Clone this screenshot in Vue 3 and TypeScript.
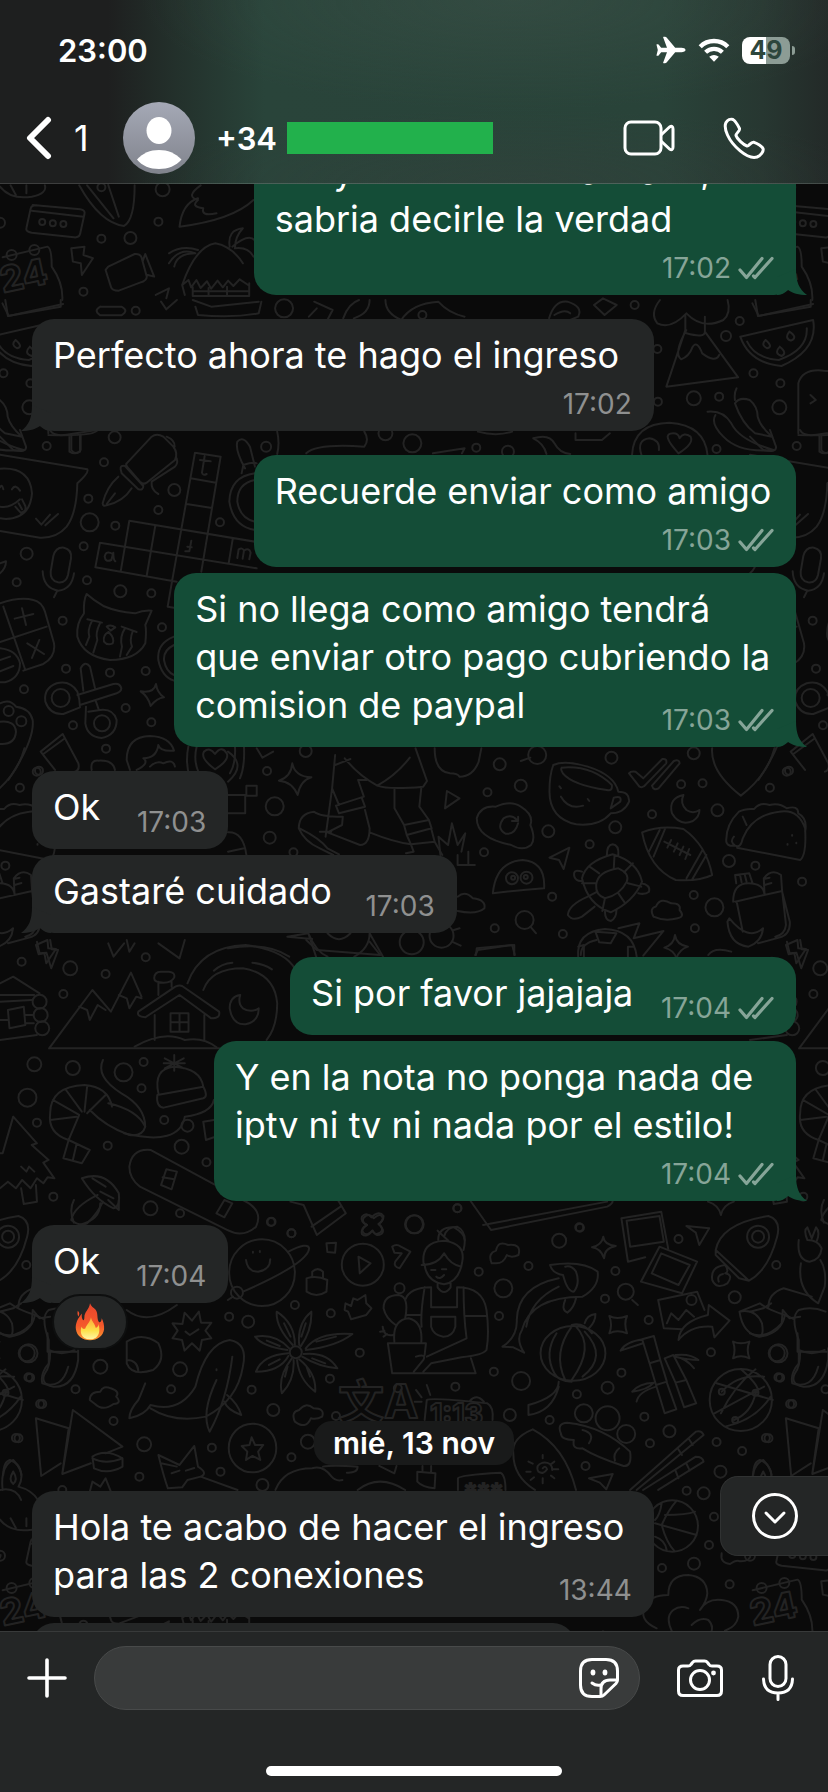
<script setup lang="ts">
import { ref } from 'vue'

interface Message {
  id: number
  mine: boolean
  lines: string[]
  time: string
  /** share of the window width taken by the bubble, in percent */
  width: number
  /** time sits on a row of its own under the text */
  stacked?: boolean
  /** last bubble of a run carries the tail */
  tail?: boolean
  reaction?: boolean
}

const before: Message[] = [
  { id: 1, mine: true, lines: ['No yo uso solo una clave, no', 'sabria decirle la verdad'], time: '17:02', width: 65.5, stacked: true, tail: true },
  { id: 2, mine: false, lines: ['Perfecto ahora te hago el ingreso'], time: '17:02', width: 75.1, stacked: true, tail: true },
  { id: 3, mine: true, lines: ['Recuerde enviar como amigo'], time: '17:03', width: 65.5, stacked: true },
  { id: 4, mine: true, lines: ['Si no llega como amigo tendrá', 'que enviar otro pago cubriendo la', 'comision de paypal'], time: '17:03', width: 75.1, tail: true },
  { id: 5, mine: false, lines: ['Ok'], time: '17:03', width: 23.7 },
  { id: 6, mine: false, lines: ['Gastaré cuidado'], time: '17:03', width: 51.3, tail: true },
  { id: 7, mine: true, lines: ['Si por favor jajajaja'], time: '17:04', width: 61.1 },
  { id: 8, mine: true, lines: ['Y en la nota no ponga nada de', 'iptv ni tv ni nada por el estilo!'], time: '17:04', width: 70.3, stacked: true, tail: true },
  { id: 9, mine: false, lines: ['Ok'], time: '17:04', width: 23.7, tail: true, reaction: true },
]
const after: Message[] = [
  { id: 10, mine: false, lines: ['Hola te acabo de hacer el ingreso', 'para las 2 conexiones'], time: '13:44', width: 75.1 },
  { id: 11, mine: false, lines: [''], time: '', width: 65.6 },
]

type Entry = { kind: 'message'; message: Message } | { kind: 'date'; label: string }
const entries: Entry[] = [
  ...before.map((message): Entry => ({ kind: 'message', message })),
  { kind: 'date', label: 'mié, 13 nov' },
  ...after.map((message): Entry => ({ kind: 'message', message })),
]

function turns(index: number): boolean {
  const a = entries[index - 1]
  const b = entries[index]
  return !!a && a.kind === 'message' && b.kind === 'message' && a.message.mine !== b.message.mine
}

const draft = ref('')

/* Wallpaper: each sheet has its own drawing units, placed by origin and scale. */
interface Sheet {
  x: number
  y: number
  sx: number
  sy: number
  paths: string[]
  dots: [number, number, number][]
}
const sheets: Sheet[] = [
  {
    x: 0, y: 0, sx: 0.528, sy: 0.3333,
    paths: [
      'M62 615L152 628Q162 630 160 642L152 700Q150 714 140 712L60 698Q48 695 50 684L58 626Q60 614 70 616M60 632L158 650',
      'M150 556Q190 670 235 678Q255 660 255 556M165 556L215 655M205 555L225 650',
      'M375 595Q345 610 340 680Q440 660 480 600M380 556Q350 590 375 600Q360 620 385 625Q380 650 410 640',
      'M135 745L160 740L158 765L176 775L155 825L153 790L138 785Z',
      'M205 800L255 762Q265 760 268 772L278 830Q278 842 265 848L225 872Q212 872 210 860L200 810ZM270 785L275 762L292 830L280 825',
      'M345 855Q370 740 408 730Q440 740 460 790M320 790Q340 740 370 760Q335 760 330 800M320 760Q345 735 375 750M435 740Q430 690 460 685Q445 710 445 745M440 740Q470 700 482 720M445 745Q470 740 480 770M350 885L345 855L357 840L362 862L372 840L380 864L392 844L400 866L412 842L422 862L432 842L442 858L454 838L470 855M365 862V888H472V850M395 885V864M430 885V860M365 874H472',
      'M5 772L90 740Q98 745 98 800Q120 850 118 900',
      'M0 560Q20 600 60 590Q90 580 85 556M20 556L30 585M50 556V580',
      'M295 885L320 865L315 895',
    ],
    dots: [[80, 666, 3], [100, 670, 3], [120, 672, 3], [22, 765, 5], [65, 750, 5], [308, 568, 7], [300, 665, 4], [192, 716, 4], [247, 714, 6], [158, 875, 4], [0, 668, 5], [192, 562, 4]],
  },
  {
    x: 0, y: 300, sx: 0.528, sy: 0.3333,
    paths: [
      'M10 0L15 48L115 20V0', 'M190 20H230Q245 32 230 46H190Q176 32 190 20', 'M305 5L315 28L335 0M370 20L375 45Q440 55 490 40L495 5M365 0L400 20L490 5',
      'M595 5L630 30L620 60M585 50L600 25M650 55Q660 10 680 0M670 55Q700 40 700 0M730 0Q730 40 760 60Q780 10 830 5Q850 40 880 50',
      'M1040 55Q1050 0 1075 5Q1105 20 1095 50L1080 60M1050 45Q1070 25 1080 40M1125 15L1142 -5L1168 15L1145 45Z',
      'M1250 0Q1230 40 1245 70Q1270 90 1300 40Q1330 90 1370 60Q1385 40 1378 0M1298 45V90L1262 260L1398 232L1335 95V50M1300 100Q1335 115 1335 95M1300 90Q1275 160 1290 178Q1305 170 1312 140Q1320 120 1330 160Q1355 190 1362 165',
      'M1402 110L1540 60Q1550 150 1480 198Q1420 190 1402 110M1415 125Q1430 175 1475 180Q1530 150 1528 85M1450 120Q1440 135 1453 145Q1465 140 1450 120M1477 140Q1465 160 1480 168Q1492 160 1477 140M1495 95Q1485 115 1498 122Q1512 112 1495 95',
      'M1425 10L1437 48L1540 12', 'M1512 400V250Q1520 205 1560 212Q1600 215 1605 260V390Q1600 410 1512 405M1552 405V455Q1562 465 1572 455V405M1535 285L1545 300L1535 310M1590 285L1580 300',
      'M1340 335Q1370 330 1385 370Q1400 420 1465 450Q1400 460 1370 410Q1345 370 1355 345M1392 300Q1390 280 1395 265M1392 310Q1400 290 1420 300Q1435 320 1435 350Q1440 380 1462 410L1430 400Q1405 370 1392 310',
      'M1197 465Q1200 370 1268 368Q1335 375 1340 465M1285 460Q1250 400 1275 400Q1285 400 1287 415Q1295 395 1308 410Q1315 430 1285 460M1215 465Q1205 420 1230 415Q1250 420 1248 450',
      'M525 395Q530 430 525 462M580 460Q600 430 690 440Q700 420 690 395M820 460L880 445L875 460M1010 415Q1040 400 1050 430Q1060 460 1080 462M1010 415Q1030 430 1035 462M1090 400V420H1140L1155 400M905 395Q940 410 970 395',
    ],
    dots: [[257, 32, 4], [538, 25, 9], [800, 45, 4], [1202, 15, 4], [1401, 63, 4], [1375, 108, 5], [1427, 220, 4], [1478, 250, 4], [1245, 147, 4], [1314, 295, 7], [1362, 290, 4], [1476, 322, 7], [1246, 305, 4], [1357, 447, 4], [504, 440, 5], [781, 430, 9], [902, 443, 4], [962, 455, 6], [730, 400, 7]],
  },
  {
    x: 0, y: 430, sx: 0.3333, sy: 0.3333,
    paths: [
      'M0 74L262 118Q268 128 232 160Q230 250 200 290Q170 325 120 323L0 303', 'M0 116Q90 110 96 190Q90 265 18 267L0 265M0 172Q6 160 10 178M36 178Q46 160 60 182M0 230Q30 236 60 208M46 230L62 248Q80 246 76 228L66 208M56 220L66 238M108 266L124 284L150 254M136 286L174 252',
      'M380 100L455 20Q470 8 490 20L520 50Q535 70 525 90L440 158Q430 165 420 155L383 112Q376 104 380 100M362 118Q360 105 375 108L430 168Q430 182 415 178L365 130ZM355 140Q320 170 308 220Q308 230 320 226Q370 215 395 175M320 222L345 190M500 20Q525 30 524 50M530 85Q535 100 525 110L455 155Q452 180 475 192',
      'M585 68L662 80L604 425M585 68L516 455L503 530L540 536M572 145L648 158M560 222L636 234M388 272L770 336M300 338L770 415M388 272L362 425M300 338L286 412L530 455M466 286L440 438M698 328L686 400',
      'M160 378Q168 350 192 353Q216 358 213 385L204 435Q198 460 174 457Q150 452 152 425ZM128 424Q130 475 175 482Q215 478 222 430M172 482L162 502',
      'M0 520Q60 500 100 510Q125 515 135 545L162 640Q168 680 130 702L70 722M10 530L76 720M0 636L140 590M44 566L100 552M66 535L78 585M82 640L132 672M118 630L96 684M0 655Q50 660 60 700Q60 745 15 757L0 757M0 690L30 680M0 724L40 708',
      'M260 492Q250 510 252 550Q228 580 232 620Q250 680 330 690Q410 690 436 640Q440 600 436 585L455 542Q430 540 405 550Q350 545 310 528Q280 510 260 492ZM262 568L306 578M365 590L410 606M275 575Q262 600 268 620L258 645M300 580Q285 610 292 630L280 668M375 595Q358 620 366 650L360 680M398 604Q388 630 396 650L380 675M326 606Q345 625 338 640Q322 648 312 635Q308 615 326 606M320 590Q332 582 346 592L332 602Z',
      'M232 785Q210 750 170 760Q130 775 136 815Q150 855 190 852L240 832Q240 810 232 785M232 795L340 762Q360 758 364 775Q364 785 350 790L240 825M250 782L242 715Q255 690 270 710L285 775M258 830L256 880Q262 920 305 924Q350 915 350 870Q340 835 300 840L265 845M288 815L296 838',
      'M468 762Q462 790 422 784Q445 800 452 828Q470 805 492 802Q472 790 468 762Z',
      'M0 875Q45 870 48 905Q45 945 0 942M0 820Q30 805 48 830Q90 835 98 870Q105 930 25 1050',
      'M122 965L188 912L235 1000Q240 1020 225 1025M122 965L165 1020M130 972L195 925',
      'M380 990Q380 920 450 918Q510 920 522 962Q480 965 475 945Q470 985 430 985Q450 1000 410 1020M380 990L390 1020M450 1010Q470 990 490 1000Q520 985 525 1010M275 1020Q270 990 295 992Q340 990 345 1020',
      'M565 950Q555 1000 570 1045M590 950Q580 990 595 1025M732 950Q735 1010 720 1045M705 950Q708 1000 690 1030M645 1018Q600 985 612 965Q630 950 645 972Q665 945 680 970Q690 990 645 1018Z',
      'M765 130Q690 140 688 215Q700 290 765 300M765 150Q712 160 712 215Q720 265 765 275M735 115Q705 60 712 35Q730 15 750 50L765 110M725 130L730 105Q760 95 770 100M0 20L40 60Q80 70 78 50L60 0M150 0Q160 20 200 14L290 0M214 16V60Q228 78 242 60V14',
      'M522 620Q470 640 475 690Q485 740 522 752M522 645Q490 660 492 690Q498 725 522 735M0 400L18 394Q18 415 0 430',
      'M600 90L632 94M614 78L606 128Q608 138 620 132M562 350L575 352M574 332L568 364H556M712 384L716 358Q728 352 732 362L728 386M732 362Q748 352 752 368L748 388M338 372Q318 360 314 380Q316 398 334 390L340 368Q340 390 346 394',
    ],
    dots: [[182, 804, 9], [306, 880, 8], [26, 843, 5], [64, 874, 5], [140, 48, 4], [312, 97, 4], [344, 22, 6], [265, 206, 4], [523, 180, 6], [475, 240, 4], [269, 277, 9], [346, 287, 4], [251, 349, 4], [80, 371, 6], [50, 457, 4], [261, 451, 4], [361, 484, 6], [454, 490, 4], [188, 572, 4], [486, 592, 4], [198, 716, 4], [330, 728, 4], [437, 723, 4], [72, 778, 4], [377, 834, 4], [454, 877, 4], [219, 886, 4], [318, 956, 4], [117, 1022, 4], [660, 277, 4]],
  },
  {
    x: 228, y: 745, sx: 0.3827, sy: 0.3333,
    paths: [
      'M168 55Q175 95 218 97Q190 105 182 150Q168 110 133 107Q165 95 168 55Z', 'M0 150H45V205H0M48 122H75V152H48Z',
      'M280 30L272 130L290 180M280 60L320 42M305 40Q340 90 390 122Q440 90 475 38M390 122Q420 135 510 125L520 108L490 10M340 105L355 155L282 182L290 205L358 185L350 160M340 105H362M435 130V190L460 240L525 225L500 185L505 130M460 240L467 270L532 250L525 225M467 270L478 298L540 290L532 255M358 195L370 250Q370 300 345 300L260 262L298 240L300 215Q240 215 225 200Q185 205 185 250Q200 290 240 310L275 330M187 250Q240 280 260 310L290 328M370 262Q430 290 478 298L485 320L465 325M540 290L560 330M272 130L255 275M240 260H270',
      'M540 10Q540 80 580 85Q600 85 605 95Q640 95 655 50L662 10', 'M572 138L605 160L567 190Z',
      'M650 220Q660 180 700 185Q740 165 765 185Q800 210 790 240Q805 280 792 300Q770 320 740 300Q650 280 650 220M755 225Q740 205 720 220Q700 250 725 266Q750 270 758 235M742 228H758V215',
      'M555 330L550 275L575 300L585 235L600 300L620 265L610 320M600 330V360H645M628 360V320',
      'M850 60Q880 45 940 65Q1010 90 1020 140Q1050 140 1048 170Q1035 205 1000 205Q970 245 910 238Q840 220 840 140Q840 90 850 60M872 68Q950 60 1003 120Q1005 140 990 135Q900 120 875 85Q868 72 872 68M1000 190L1008 158Q1030 150 1025 170ZM870 155Q890 195 928 182M866 124L870 130M940 162L944 168',
      'M1048 85L1075 125Q1085 130 1092 118L1145 55Q1148 40 1135 42L1085 100L1065 80Q1052 78 1048 85M1108 122L1165 48Q1180 42 1180 55L1125 130Q1112 138 1108 122',
      'M1190 150Q1150 160 1160 205Q1180 245 1215 228Q1232 215 1232 195Q1215 208 1198 195Q1180 175 1190 150Z', 'M1265 10Q1260 80 1340 152Q1410 90 1428 10',
      'M1330 308L1495 345Q1512 330 1508 250Q1490 190 1440 200Q1370 210 1345 280Q1340 310 1325 302Q1310 290 1322 275M1302 290Q1300 240 1335 200Q1350 190 1375 192Q1390 170 1415 180Q1440 172 1460 190Q1490 180 1490 205Q1515 220 1508 260M1345 215L1355 240M1302 290Q1305 305 1325 302M1474 270V272M1462 297V299M1485 293V295',
      'M1082 262Q1130 240 1190 252Q1250 300 1265 390Q1230 410 1170 405Q1100 370 1082 262ZM1128 255L1100 320M1142 252L1112 335M1240 315L1198 400M1250 330L1212 405M1140 290L1208 330M1158 285L1148 308M1175 295L1165 320M1190 305L1180 330M1205 312L1195 342',
      'M692 445Q700 350 770 345Q830 350 826 430Q760 435 692 445Z', 'M892 308L840 338L865 345L877 372Z',
      'M925 400Q935 350 1005 328Q1070 350 1082 410Q1060 470 1000 502Q940 480 925 400M962 420Q965 380 1020 370Q1050 385 1042 410Q1025 450 985 460Q960 450 962 420M990 330Q990 300 1005 298Q1022 300 1020 330M925 380Q900 370 905 395Q910 410 925 408M940 455Q890 480 888 510Q900 530 925 515L958 485M985 500Q985 525 1000 528Q1015 520 1015 495M1080 415Q1105 420 1100 440Q1090 450 1072 445M1010 330L1008 370M1058 355L1035 382M1045 415L1080 425M1020 445L1038 475M985 460L978 498M965 440L940 455M925 415H962M945 365L970 385',
      'M1112 515Q1100 490 1118 485Q1130 455 1158 475Q1185 475 1180 495Q1195 515 1175 520Q1140 530 1112 515', 'M600 455Q620 435 640 460Q675 465 670 490Q650 510 600 498', 'M790 545L805 565M790 38L765 48',
      'M1320 470Q1320 415 1360 415Q1400 415 1402 450L1400 400Q1420 370 1445 390L1448 440L1468 530Q1470 570 1440 578L1385 595M1325 470L1448 438L1458 540Q1455 570 1430 575M1330 475L1345 560M1328 415L1325 390L1362 385L1370 412M1338 390L1342 412M1350 388L1355 410M1400 402L1415 398M1402 420L1420 414M1305 530Q1310 600 1360 605Q1395 590 1398 550Q1360 590 1310 520Z',
      'M915 635Q910 560 985 552Q1060 555 1068 635M960 560L1015 565L1000 595L970 592ZM1020 550L1075 535L1060 580L1138 558L1085 632M1045 635V605H1060M915 605L930 600V635', 'M1168 570Q1172 600 1202 605Q1180 612 1172 640Q1165 615 1140 608Q1165 600 1168 570', 'M1458 600L1488 585L1490 610L1510 612L1485 655L1480 625L1465 628Z',
      'M155 575L210 565L230 635M155 575L220 582M370 565L405 635M0 610Q100 590 160 635M210 565Q230 620 260 635M370 565Q370 610 330 635M260 565Q290 600 320 565M590 555L605 550M585 590L608 602M648 630L650 610L748 600V630M1255 630Q1270 605 1315 620M75 10L90 38L118 20M0 20Q50 60 0 110M0 262Q40 260 48 330M0 320L42 310',
    ],
    dots: [[742, 400, 6], [780, 398, 6], [745, 398, 2], [778, 396, 2], [480, 592, 12], [558, 572, 12], [775, 525, 9], [808, 30, 9], [203, 18, 6], [102, 78, 4], [710, 58, 6], [678, 142, 4], [765, 122, 6], [1002, 38, 6], [1184, 118, 4], [1240, 115, 4], [1217, 25, 6], [1108, 208, 4], [1279, 196, 6], [1416, 128, 4], [1460, 80, 4], [1012, 247, 6], [837, 259, 6], [945, 298, 4], [122, 184, 9], [109, 278, 6], [669, 322, 4], [847, 455, 4], [697, 550, 4], [875, 567, 4], [1217, 450, 4], [1271, 487, 9], [1220, 550, 4], [1309, 348, 6], [1378, 362, 4], [1500, 410, 4], [171, 322, 4]],
  },
  {
    x: 0, y: 940, sx: 0.528, sy: 0.3333,
    paths: [
      'M70 5L75 40L88 38L97 85L110 30L98 28L95 0M205 10L215 50L235 10M240 0L245 35L255 10M300 10L340 55L350 0',
      'M93 325L175 150L210 215L248 98L268 170M93 325H415M150 200L165 210L170 240L185 195L200 210M225 165L240 175L245 205L258 170L268 175',
      'M262 215Q258 230 275 232L340 165L400 235Q418 235 415 215L345 138Q340 134 332 140ZM293 225V300M387 225V300M300 165V125M325 140V125M292 115Q292 95 305 95H320Q332 97 330 112Q325 128 310 128Q292 128 292 115M323 220H357V275H323ZM340 220V275M323 247H357M255 320Q310 270 350 300Q385 290 410 322',
      'M355 130Q380 20 465 15Q540 30 560 90M385 150Q400 85 460 85Q520 100 525 190Q525 260 505 300M405 92Q420 70 440 68M478 68Q500 72 515 88M455 165Q435 170 435 205Q440 255 465 253Q490 245 490 205Q475 220 460 205Q450 190 455 165',
      'M0 130L25 110L75 160M0 165L65 165M15 210L45 200L48 255L18 265ZM0 185L60 180M0 300L70 285M0 240H16M48 225H62M48 250H64',
      'M300 460Q290 385 330 380Q380 385 385 440M298 465L385 440Q395 470 385 475L310 503Q295 500 298 465M330 345V392M312 355L348 385M348 355L312 385M310 370H350',
      'M95 520Q95 440 160 435Q205 440 212 500M95 520Q90 580 130 600L150 525M205 490Q260 510 275 560Q270 590 245 585Q200 560 170 510M100 480L150 525M125 450L155 515M165 440L160 515M200 465L165 520M95 540L145 530M130 600L170 630L155 670L120 655ZM145 612L138 660',
      'M195 360Q180 410 230 460Q275 500 275 560M235 580Q340 620 350 530Q400 520 405 480', 'M385 545L390 600L405 592M385 545L405 540',
      'M25 530L5 640L0 640M25 530L70 610L60 615L92 660L82 668L103 715L90 712L82 730L70 715L58 745L42 720L30 745L15 725L0 745M40 745L45 792L70 785L68 735M40 680L50 695L55 680L65 695',
      'M245 680Q250 625 285 630L460 780Q500 810 485 860Q460 895 430 870L265 740Q245 715 245 680M305 735L315 688L335 695L325 748ZM308 712L330 718M410 820L425 780L440 790L425 832Z',
      'M155 715Q200 690 225 760Q228 800 215 805Q180 780 155 715M175 715L200 740M190 755L215 775M185 765Q140 800 135 840Q150 860 165 850Q185 820 195 785',
      'M550 785L575 795L600 885L655 820L640 780M590 860L645 800', 'M688 835Q698 815 708 835Q722 815 725 835Q725 845 718 852Q728 868 720 878Q710 888 705 872Q695 890 688 878Q682 865 695 855Q685 848 688 835Z', 'M890 780L930 870L1150 800Q1162 790 1160 780M915 855L1150 785',
      'M830 900Q830 860 860 862Q880 880 880 900M900 45L905 30L970 15L975 45M1100 45Q1100 10 1130 0M580 0L600 30L720 45L700 5',
    ],
    dots: [[75, 185, 7], [77, 225, 7], [80, 265, 7], [41, 65, 4], [133, 85, 7], [200, 102, 4], [276, 52, 4], [120, 162, 4], [65, 373, 7], [138, 384, 7], [272, 366, 4], [234, 397, 9], [268, 445, 4], [52, 473, 9], [70, 548, 4], [311, 540, 4], [355, 557, 6], [204, 617, 4], [344, 620, 7], [391, 667, 4], [101, 770, 4], [285, 805, 7], [341, 820, 4], [513, 846, 4], [552, 880, 4], [784, 853, 9], [866, 805, 4], [1097, 862, 4]],
  },
  {
    x: 0, y: 1200, sx: 0.528, sy: 0.3333,
    paths: [
      'M95 455Q95 500 85 520Q75 550 100 560Q140 565 148 480V445M90 400V455H148', 'M240 425Q270 395 300 430Q315 480 290 510Q250 530 240 490ZM240 480Q260 480 262 512',
      'M68 655L130 685L118 820M68 655L78 828L115 790M138 630L118 822L172 790M138 630L232 740L200 760M175 770Q200 745 232 775V800Q205 825 178 805ZM175 775Q200 795 232 775',
      'M5 870Q0 800 25 780Q50 820 35 860Q60 870 72 900M25 815Q15 840 25 852Q35 840 25 815M0 870Q30 860 40 900', 'M170 875L175 845L190 860L200 835L210 875',
      'M318 865Q310 830 300 765L340 795L368 738L375 800Q395 820 380 830L450 870M318 865L345 862L355 840L380 830M325 820L340 812M352 812L368 804M305 790L335 800',
      'M275 550Q265 590 262 600Q245 630 245 655Q275 645 285 615Q340 640 370 560Q390 430 435 420Q470 430 460 500Q450 600 390 650Q330 670 285 625M410 540Q380 640 397 695Q430 600 440 470M430 585Q450 610 457 645Q430 630 425 605M410 508V511',
      'M170 600Q170 575 190 575Q195 555 210 565Q228 575 220 590Q232 610 215 612Q195 635 180 612Z', 'M0 335L25 325L40 310M0 400Q30 420 60 370L62 330M62 330L75 355L95 350', 'M240 330Q280 380 335 315M140 68Q130 30 140 0M150 75Q190 60 190 10M205 0L225 30V0',
    ],
    dots: [[54, 460, 9], [57, 533, 4], [190, 500, 7], [143, 568, 4], [80, 612, 4], [215, 663, 4], [35, 715, 4], [273, 733, 7], [264, 830, 4], [341, 508, 7], [324, 568, 4], [118, 870, 4]],
  },
  {
    x: 150, y: 1200, sx: 0.4325, sy: 0.3333,
    paths: [
      'M183 218A76 100 0 1 1 335 218A76 100 0 1 1 183 218M320 155Q365 125 368 145Q365 190 215 275M180 300L192 290M222 180Q225 215 250 215Q278 210 278 178M238 155V158M254 153V156',
      'M362 235Q385 225 410 240L408 275Q385 295 362 275ZM375 230V215Q388 200 400 215V235', 'M482 170L510 190L485 220Z', 'M408 130L430 128L428 158L410 156Z',
      'M490 50Q500 35 512 52Q530 30 540 48Q540 62 528 72Q545 90 535 102Q522 112 515 92Q500 115 490 102Q486 90 502 75Q486 65 490 50', 'M560 140Q570 130 580 140L602 155L577 205Q562 200 567 185L582 160L565 158Z',
      'M330 435Q290 380 293 335Q335 370 335 435M345 435Q340 370 373 335Q375 390 348 440M360 445Q390 395 468 402Q430 440 360 450M355 462Q410 455 433 505Q390 500 352 470M345 478Q385 520 382 575Q345 540 340 480M332 480Q335 540 305 580Q295 530 328 475M320 468Q300 515 245 515Q260 465 320 460M318 450Q260 440 243 410Q290 400 322 445M310 370L325 410M360 370L350 410M385 425L430 410M375 475L405 490M362 500L370 530M318 500L312 530M275 495L300 478M270 422L300 438',
      'M52 370L75 372L80 338L97 362L113 335L118 368L142 368L128 392L142 415L120 420L115 452L97 430L80 452L74 420L52 415L64 392ZM82 395L92 405L112 388',
      'M452 310L465 318L470 295L480 300L498 285L500 310L512 325L500 345L465 358L458 335L450 330Z',
      'M680 110Q685 80 710 80Q735 95 725 150M665 92L690 122M633 195Q625 125 680 122Q730 130 722 185Q715 245 680 253Q640 245 635 195M680 160Q665 195 628 195M680 160Q695 195 720 200M650 210H660M675 208H685M662 230Q670 240 680 225M665 253V262Q680 290 695 262V250M590 300Q600 262 650 262M710 262Q770 262 778 330Q785 400 778 450Q770 465 720 472L650 490L632 515M635 262Q625 340 628 380M650 262V322H710V262M725 262Q725 350 732 415L640 470M650 350H706V380Q700 410 678 410Q655 405 650 380ZM595 345H625M730 348H778M550 430H638L635 465M550 430L560 520H753L742 475M615 470Q640 460 632 480L610 515M565 425Q560 360 598 355Q632 365 627 430M590 355Q600 290 575 285Q540 285 540 325Q545 355 568 375M538 380Q540 410 562 405M532 395L542 392M540 410L548 402',
      'M815 440Q850 410 848 360Q850 260 945 235M865 458Q845 420 860 390Q880 290 1000 290Q1040 260 1035 215Q1000 180 925 195Q930 220 955 225M815 440L840 442L865 458M955 225Q965 275 980 275Q995 250 985 215Q975 195 960 200M960 300Q950 330 965 338Q980 325 985 295M870 380Q880 300 945 260',
      'M903 460A75 82 0 1 1 1053 460A75 82 0 1 1 903 460M975 380Q930 460 960 540M985 380Q1030 440 975 540M1005 395Q1060 470 1000 530M940 400Q910 460 935 520M975 375Q1000 365 1022 400M1005 370Q1010 345 1030 342Q1030 365 1015 385M935 520Q945 545 975 545M945 545Q945 590 875 615V645Q930 635 945 560',
      'M790 190Q780 160 800 152Q805 120 828 135Q860 130 852 165Q835 175 825 165Q818 190 800 190Z', 'M335 665Q325 635 345 630Q360 605 378 625Q405 625 398 650Q385 660 372 655Q360 690 335 665',
      'M1048 110Q1050 135 1077 138Q1050 145 1050 175Q1042 145 1022 142Q1045 135 1048 110', 'M1062 348Q1080 360 1103 348Q1095 370 1103 400Q1080 388 1062 400Q1070 375 1062 348', 'M1348 425Q1366 435 1386 425Q1378 450 1386 475Q1366 462 1348 475Q1355 450 1348 425', 'M1290 5Q1315 15 1320 45Q1325 15 1350 5',
      'M1090 55L1182 35L1198 145M1090 55L1105 185L1145 172M1102 62L1178 48L1188 125L1110 140ZM1178 140L1265 185L1230 280L1135 245ZM1182 160L1248 195L1222 255L1160 220ZM1175 300L1265 275L1282 330M1175 300L1188 385L1230 388M1195 370L1205 340L1222 360L1240 330L1258 350M1222 420Q1225 365 1290 345L1292 315L1340 362L1305 412L1300 380Q1250 375 1222 420',
      'M1240 78L1293 85L1270 135L1262 98Z', 'M1308 150Q1320 70 1430 48Q1460 60 1450 110Q1430 210 1385 242L1362 235L1308 165ZM1308 150L1385 242M1300 240Q1295 200 1330 195Q1340 215 1330 220Q1350 225 1335 250Q1310 270 1300 240M1315 245Q1310 225 1325 222',
      'M1500 120Q1495 180 1525 185Q1550 180 1553 145Q1545 120 1520 120Q1510 90 1520 82L1530 115L1540 82Q1550 95 1542 122M1505 190Q1495 270 1545 310L1560 260Q1565 210 1550 180',
      'M1363 335Q1400 325 1415 370Q1420 410 1408 410Q1370 400 1363 335M1363 335L1410 310Q1430 330 1468 345Q1460 400 1410 410M1430 320Q1430 280 1465 265L1530 290M1468 345L1490 358M1500 330Q1480 350 1500 420V490Q1480 520 1485 550Q1530 570 1545 500M1500 450Q1530 470 1560 450M1500 330Q1530 318 1562 335',
      'M1138 418L1165 408L1180 480L1155 490ZM1155 490L1170 555L1195 545L1180 480M1170 555L1190 640L1217 628L1195 548M1190 475L1210 465L1240 540L1215 548ZM1215 548L1235 622L1263 610L1240 540M1140 430L1088 452Q1100 425 1140 418M1215 465Q1250 460 1268 480Q1245 480 1215 470Q1240 475 1258 505M1170 560Q1130 575 1125 605M1115 575Q1130 550 1165 548Q1150 570 1115 575',
      'M1294 600A72 93 0 1 1 1438 600A72 93 0 1 1 1294 600M1322 575Q1360 520 1420 530M1310 550L1440 600M1320 640Q1350 560 1400 508M1305 640L1420 560M1330 680Q1400 660 1435 590M1366 507Q1420 570 1400 580Q1390 640 1350 660',
      'M635 660L640 600Q650 592 780 610Q795 620 792 660M740 602Q755 580 772 605M640 555L648 585M615 570L628 592M612 605L628 605',
      'M182 744A55 73 0 1 1 292 744A55 73 0 1 1 182 744M235 712L243 735L262 735L250 755L255 780L237 768L222 780L225 755L212 738L230 735Z',
      'M290 870Q310 805 375 805Q400 795 420 830Q430 845 445 840M400 800Q420 795 480 800Q480 820 455 818M480 870Q530 820 590 870M618 815L660 820L658 865Q630 862 618 845ZM630 812V798M650 815V798M712 870V835Q715 825 810 818Q822 825 822 870M530 798L565 820L570 798',
      'M840 760Q835 715 885 688Q960 740 985 870M840 760Q840 830 890 870M908 765V775M908 835V850M875 785L885 791M935 785L927 793M870 815H880M932 808H944M880 840L888 832M935 835L927 827M908 805Q915 795 918 808Q910 825 898 815Q890 795 908 788Q930 785 930 810',
      'M950 700Q940 670 965 668Q1050 680 1110 755Q1115 800 1095 798Q1030 770 1000 745Q975 750 980 720Q950 720 950 700M1000 690Q1030 700 1015 730M1085 745Q1070 760 1075 782',
      'M1110 870L1262 695Q1275 690 1280 705L1125 870M1140 870L1262 770Q1278 770 1280 785L1175 870M1245 715L1255 735M1220 745L1230 765M1240 790L1248 812M1215 812L1222 835', 'M1015 835L1070 822L1055 868L1040 848Z', 'M1115 300L1128 315',
    ],
    dots: [[492, 194, 21], [337, 457, 6], [201, 278, 6], [577, 265, 5], [1252, 300, 5], [1406, 110, 11], [1406, 110, 6], [1322, 575, 3], [1400, 578, 3], [1353, 660, 3], [1003, 640, 9], [1058, 655, 12], [1101, 702, 9], [1100, 275, 8], [281, 65, 4], [327, 100, 4], [612, 73, 9], [711, 25, 4], [946, 122, 7], [994, 83, 4], [875, 198, 4], [760, 215, 4], [817, 265, 9], [1076, 213, 4], [1222, 117, 4], [1052, 296, 4], [1153, 360, 4], [807, 348, 4], [1352, 292, 6], [1448, 195, 4], [335, 315, 4], [418, 340, 4], [183, 350, 4], [227, 365, 6], [485, 458, 4], [416, 536, 4], [235, 569, 4], [285, 630, 6], [430, 648, 4], [573, 565, 4], [706, 560, 4], [795, 515, 4], [858, 543, 9], [832, 645, 6], [1058, 563, 6], [987, 583, 4], [1090, 518, 4], [1297, 457, 4], [1449, 460, 8], [1453, 532, 4], [1480, 612, 4], [924, 660, 4], [1143, 650, 4], [1201, 694, 6], [1156, 730, 4], [1310, 726, 4], [1369, 753, 4], [1424, 714, 4], [1319, 815, 6], [1007, 798, 4], [365, 725, 7], [143, 743, 4], [327, 772, 4], [163, 815, 4], [260, 855, 6]],
  },
  {
    x: 540, y: 1460, sx: 0.3333, sy: 0.3333,
    paths: [
      'M320 198A77 77 0 1 1 474 198A77 77 0 1 1 320 198M345 190L470 225M365 130Q360 165 345 180M375 165Q440 165 465 155M365 195Q385 150 410 122M365 195Q380 250 405 275M345 230Q375 240 380 270',
      'M385 405Q385 345 445 345Q500 350 502 400Q500 425 480 450Q500 415 545 420Q595 425 595 470Q590 500 555 512M385 405Q330 405 315 440Q295 480 350 505M395 512Q375 470 400 450Q420 435 445 445M455 495Q480 470 505 480Q520 495 515 512',
      'M640 45Q640 5 660 0Q690 10 695 45', 'M545 280Q540 310 570 312Q590 298 600 304Q630 305 632 285',
    ],
    dots: [[491, 100, 6], [440, 92, 4], [522, 170, 4], [507, 255, 4], [462, 311, 6], [366, 324, 4], [569, 373, 4]],
  },
]

const tiles: [number, number][] = [[-750, 0], [0, 0], [750, 0], [0, 1333], [750, 1333]]
</script>

<template>
  <div class="screen">
    <header class="top">
      <div class="status">
        <span class="clock">23:00</span>
        <div class="status-icons">
          <svg class="plane" viewBox="0 0 30 28" aria-hidden="true">
            <path d="M29.500 14C29.500 12.600 27.500 11.800 25.500 11.800H19.200L10.600 1.400Q10 .8 9 .8H7.600Q6.900 .8 7.200 1.600L11 11.800H5.200L2.600 8.600Q2.300 8.200 1.700 8.200H.9Q.4 8.200 .5 8.800L1.800 14L.5 19.200Q.4 19.800 .9 19.800H1.700Q2.300 19.800 2.600 19.400L5.200 16.200H11L7.200 26.400Q6.900 27.200 7.600 27.200H9Q10 27.200 10.600 26.600L19.200 16.200H25.500C27.500 16.200 29.500 15.400 29.500 14Z" fill="#fff" />
          </svg>
          <svg class="wifi" viewBox="0 0 32 24" aria-hidden="true">
            <path d="M2.200 8.700A19.500 19.500 0 0 1 29.800 8.700" fill="none" stroke="#fff" stroke-width="4.400" />
            <path d="M7.600 14.300A12 12 0 0 1 24.400 14.300" fill="none" stroke="#fff" stroke-width="4.200" />
            <path d="M16 23.800L11.200 18.800Q16 15 20.800 18.800Z" fill="#fff" />
          </svg>
          <div class="battery"><span>49</span></div>
        </div>
      </div>
      <div class="bar">
        <button class="back" type="button" aria-label="Volver">
          <svg viewBox="0 0 26 44" aria-hidden="true"><path d="M22 4L4 22L22 40" fill="none" stroke="#fff" stroke-width="6" stroke-linecap="round" stroke-linejoin="round" /></svg>
          <span>1</span>
        </button>
        <svg class="avatar" viewBox="0 0 72 72" aria-hidden="true">
          <defs>
            <linearGradient id="av" x1="0" y1="0" x2="0" y2="1"><stop offset="0" stop-color="#a5a9b6" /><stop offset="1" stop-color="#80838c" /></linearGradient>
          </defs>
          <circle cx="36" cy="36" r="36" fill="url(#av)" />
          <ellipse cx="36" cy="28.500" rx="12.500" ry="13.500" fill="#fff" />
          <path d="M14 57.500C20 51 27 48 36 48S52 51 58.500 57.500C53 64 45 67 36 67S19 64 14 57.500Z" fill="#fff" />
        </svg>
        <h1 class="name">+34</h1>
        <span class="redacted"></span>
        <button class="call video" type="button" aria-label="Videollamada">
          <svg viewBox="0 0 52 36" aria-hidden="true">
            <g fill="none" stroke="#fff" stroke-width="3" stroke-linejoin="round"><rect x="2" y="2" width="36" height="32" rx="6" /><path d="M38 15L46.500 7Q50 5 50 9V27Q50 31 46.500 29L38 21" /></g>
          </svg>
        </button>
        <button class="call phone" type="button" aria-label="Llamar">
          <svg viewBox="0 0 42 42" aria-hidden="true">
            <path d="M3 5.500C4.500 3 7.500 1.500 10 2.500C12 3.500 15 8.500 16.500 11.500C17.500 13.800 12.500 16.500 13 18.500C14 22 20.500 28 24 29C26 29.500 27.500 25 30.500 25.200C34 26.500 38.500 29 40 31.500C41 34.500 37.500 38.500 34 40C24 43 9 28 4.500 18C2.500 13.500 1.500 8.500 3 5.500Z" fill="none" stroke="#fff" stroke-width="3" stroke-linejoin="round" />
          </svg>
        </button>
      </div>
    </header>

    <main class="chat">
      <svg class="wallpaper" aria-hidden="true">
        <defs>
          <g id="doodles">
            <g v-for="(s, i) in sheets" :key="i">
              <g :transform="`matrix(${s.sx} 0 0 ${s.sy} ${s.x} ${s.y})`">
                <path v-for="(d, k) in s.paths" :key="k" :d="d" vector-effect="non-scaling-stroke" />
              </g>
              <circle v-for="(c, k) in s.dots" :key="k" :cx="s.x + c[0] * s.sx" :cy="s.y + c[1] * s.sy" :r="c[2]" />
            </g>
            <text x="3" y="293" font-size="36" font-weight="800" transform="rotate(-12 3 293)">24</text>
            <text x="338" y="1418" font-size="46" font-weight="700">文A</text>
            <text x="430" y="1424" font-size="28" font-weight="800">1:13</text>
            <text x="464" y="1502" font-size="26">***</text>
          </g>
        </defs>
        <g class="ink" transform="translate(0 -184)">
          <use v-for="(t, i) in tiles" :key="i" href="#doodles" :x="t[0]" :y="t[1]" />
        </g>
      </svg>

      <div class="thread">
        <template v-for="(e, i) in entries" :key="i">
          <div v-if="e.kind === 'date'" class="date"><span>{{ e.label }}</span></div>
          <article
            v-else
            class="bubble"
            :class="{ mine: e.message.mine, stacked: e.message.stacked, turn: turns(i) }"
            :style="{ width: e.message.width + '%' }"
          >
            <p class="text">{{ e.message.lines.join('\n') }}</p>
            <div class="meta">
              <time>{{ e.message.time }}</time>
              <svg v-if="e.message.mine" class="ticks" viewBox="0 0 36 24" aria-hidden="true">
                <path d="M2 14L8.500 21.500L24 2.500M15.500 20L17 21.500L34 2.500" fill="none" stroke="currentColor" stroke-width="3.200" stroke-linecap="round" stroke-linejoin="round" />
              </svg>
            </div>
            <svg v-if="e.message.tail" class="tail" viewBox="0 0 30 26" aria-hidden="true">
              <path d="M0 8L19 0C19 13 22 20 30 26C22 26 15 24 11 21C8 24 4 26 0 26Z" fill="currentColor" />
            </svg>
            <button v-if="e.message.reaction" class="reaction" type="button" aria-label="Reacción: fuego">
              <svg viewBox="0 0 32 40" aria-hidden="true">
                <defs>
                  <linearGradient id="fl" x1="0" y1="0" x2="0" y2="1"><stop offset="0" stop-color="#e8452c" /><stop offset=".6" stop-color="#f4582b" /><stop offset="1" stop-color="#fb9a2e" /></linearGradient>
                  <linearGradient id="fi" x1="0" y1="0" x2="0" y2="1"><stop offset="0" stop-color="#fba63a" /><stop offset=".6" stop-color="#fde14a" /><stop offset="1" stop-color="#fff6a8" /></linearGradient>
                </defs>
                <path d="M16 0C15 7 10 9 10 15C10 18 9 19 8 17C7 15 7 13 7.500 11C3 16 0 22 1 28C2 35 8 39.500 16 39.500S30 35 31 28C31.500 23 30 19 28.500 16C28.500 19 27 21 25.500 20C23 17 25 11 22 7C20 4.500 17 3.500 16 0Z" fill="url(#fl)" />
                <path d="M3 8C5 10 5 12 3.500 14C2.500 12 2.500 10 3 8Z" fill="#f0522d" />
                <path d="M17 15C18 20 21 21 22 26C24 26 25 24 25 22C27 28 27 38 16 38.500C6 38 5 30 7 25C8 27 9 28 11 27C12 23 16 21 17 15Z" fill="url(#fi)" />
              </svg>
            </button>
          </article>
        </template>
      </div>

      <button class="to-end" type="button" aria-label="Ir al final">
        <svg viewBox="0 0 48 48" aria-hidden="true"><g fill="none" stroke="#fff" stroke-width="3" stroke-linecap="round" stroke-linejoin="round"><circle cx="24" cy="24" r="21.500" /><path d="M15 21L24 30L33 21" /></g></svg>
      </button>
    </main>

    <footer class="bottom">
      <div class="composer">
        <button class="plus" type="button" aria-label="Adjuntar">
          <svg viewBox="0 0 40 40" aria-hidden="true"><path d="M20 2V38M2 20H38" stroke="#fff" stroke-width="3.600" stroke-linecap="round" /></svg>
        </button>
        <div class="field">
          <input v-model="draft" type="text" aria-label="Mensaje" />
          <button type="button" class="sticker" aria-label="Stickers">
            <svg viewBox="0 0 40 40" aria-hidden="true">
              <g fill="none" stroke="#fff" stroke-width="3" stroke-linecap="round" stroke-linejoin="round">
                <path d="M13 1.500H27Q38.500 1.500 38.500 13V22Q38.500 24 37 25.500L25 37Q23.500 38.500 21 38.500H13Q1.500 38.500 1.500 27V13Q1.500 1.500 13 1.500Z" />
                <path d="M37.500 22H31Q22 22 22 31V37.500M13 25Q17 28 21.500 27" />
              </g>
              <ellipse cx="14" cy="14.500" rx="2.400" ry="3" fill="#fff" /><ellipse cx="26" cy="14.500" rx="2.400" ry="3" fill="#fff" />
            </svg>
          </button>
        </div>
        <button class="camera" type="button" aria-label="Cámara">
          <svg viewBox="0 0 46 38" aria-hidden="true">
            <g fill="none" stroke="#fff" stroke-width="3" stroke-linejoin="round"><path d="M6 7H11Q13 7 14 5.500L15.500 3.500Q16.500 2 18.500 2H27.500Q29.500 2 30.500 3.500L32 5.500Q33 7 35 7H40Q44.500 7 44.500 11V32Q44.500 36.500 40 36.500H6Q1.500 36.500 1.500 32V11Q1.500 7 6 7Z" /><circle cx="23" cy="21" r="9.500" /></g>
            <circle cx="36.500" cy="14" r="2.400" fill="#fff" />
          </svg>
        </button>
        <button class="mic" type="button" aria-label="Grabar audio">
          <svg viewBox="0 0 32 46" aria-hidden="true">
            <g fill="none" stroke="#fff" stroke-width="3" stroke-linecap="round"><rect x="8" y="1.500" width="16" height="30" rx="8" /><path d="M1.500 24Q2 38 16 38T30.500 24M16 38V44.500" /></g>
          </svg>
        </button>
      </div>
      <div class="home"></div>
    </footer>
  </div>
</template>

<style>
body {
  margin: 0;
  background: #0a0a0a;
}
</style>

<style scoped>
.screen {
  display: flex;
  flex-direction: column;
  height: 100vh;
  overflow: hidden;
  background: #0a0a0a;
  color: #fff;
  font-family: Inter, "Liberation Sans", sans-serif;
}
button {
  display: flex;
  align-items: center;
  padding: 0;
  border: 0;
  background: none;
  color: inherit;
  font: inherit;
}
svg {
  display: block;
  flex: none;
}

.top {
  flex: none;
  box-sizing: border-box;
  height: 184px;
  border-bottom: 1px solid rgba(255, 255, 255, 0.14);
  background:
    radial-gradient(ellipse 45% 60% at 62% 0, rgba(70, 88, 80, 0.35), rgba(70, 88, 80, 0)),
    radial-gradient(ellipse 45% 40% at 62% 100%, rgba(56, 62, 60, 0.35), rgba(56, 62, 60, 0)),
    linear-gradient(to right, #1e1f1f 0, #1e1f1f 13%, #23302b 21%, #29443a 32%, #294339 80%, #273731 92%, #232a28 100%);
}
.status {
  display: flex;
  align-items: center;
  justify-content: space-between;
  height: 100px;
  padding: 0 33px 0 58px;
}
.clock {
  font-size: 31px;
  font-weight: 600;
}
.status-icons {
  display: flex;
  align-items: center;
  gap: 12px;
}
.plane {
  width: 30px;
  height: 28px;
}
.wifi {
  width: 32px;
  height: 24px;
}
.battery {
  position: relative;
  display: flex;
  align-items: center;
  justify-content: center;
  width: 48px;
  height: 27px;
  margin-right: 5px;
  border-radius: 8px;
  background: linear-gradient(to right, #fff 50%, #8c9c95 50%);
  color: #2d463c;
  font-size: 25px;
  font-weight: 700;
  line-height: 27px;
}
.battery::after {
  content: "";
  position: absolute;
  right: -5px;
  top: 9px;
  width: 3px;
  height: 9px;
  border-radius: 0 4px 4px 0;
  background: #8c9c95;
}
.bar {
  display: flex;
  align-items: center;
  height: 76px;
  padding: 0 63px 0 26px;
}
.back {
  gap: 22px;
  width: 97px;
  font-size: 36px;
}
.back svg {
  width: 26px;
  height: 44px;
}
.avatar {
  width: 72px;
  height: 72px;
}
.name {
  margin: 0 10px 0 21px;
  font-size: 31px;
  font-weight: 600;
}
.redacted {
  width: 206px;
  height: 32px;
  background: #22b14c;
}
.video {
  margin-left: auto;
}
.video svg {
  width: 52px;
  height: 36px;
}
.phone {
  margin-left: 48px;
}
.phone svg {
  width: 42px;
  height: 42px;
}

.chat {
  position: relative;
  flex: 1;
  min-height: 0;
  overflow: hidden;
}
.wallpaper {
  position: absolute;
  inset: 0;
  width: 100%;
  height: 100%;
}
.ink {
  fill: none;
  stroke: #232323;
  stroke-width: 2;
  stroke-linecap: round;
  stroke-linejoin: round;
  font-family: Inter, "Noto Sans CJK SC", sans-serif;
}
.thread {
  position: relative;
  display: flex;
  flex-direction: column;
  align-items: flex-start;
  gap: 6px;
  margin-top: -49px;
}
.bubble {
  position: relative;
  display: flex;
  flex: none;
  align-items: flex-end;
  justify-content: space-between;
  box-sizing: border-box;
  margin-left: 32px;
  padding: 12px 22px 10px 21px;
  border-radius: 22px;
  background: #242626;
  color: #242626;
}
.bubble.mine {
  align-self: flex-end;
  margin-right: 32px;
  margin-left: 0;
  background: #144d37;
  color: #144d37;
}
.bubble.turn {
  margin-top: 18px;
}
.bubble.stacked {
  flex-direction: column;
  align-items: stretch;
}
.text {
  min-height: 48px;
  margin: 0 0 8px;
  color: #fff;
  font-size: 36px;
  line-height: 48px;
  white-space: pre;
}
/* the time may slide under the end of a longer upper line */
.bubble:not(.stacked) .text {
  flex: 1 1 0;
  min-width: 0;
}
.meta {
  display: flex;
  align-items: center;
  justify-content: flex-end;
  gap: 7px;
  height: 34px;
  color: #8f9090;
  font-size: 28px;
  line-height: 34px;
}
.mine .meta {
  color: #86a598;
}
.ticks {
  width: 36px;
  height: 24px;
}
.tail {
  position: absolute;
  bottom: 0;
  left: -11px;
  width: 30px;
  height: 26px;
  transform: scaleX(-1);
}
.mine .tail {
  right: -11px;
  left: auto;
  transform: none;
}
.reaction {
  position: absolute;
  left: 20px;
  top: 69px;
  justify-content: center;
  box-sizing: content-box;
  width: 72px;
  height: 52px;
  border: 2px solid #0e0f0f;
  border-radius: 28px;
  background: #242626;
}
.reaction svg {
  width: 30px;
  height: 38px;
}
.date {
  align-self: center;
  margin: 112px 0 20px;
  padding: 0 19px;
  border-radius: 18px;
  background: #191a1a;
  font-size: 30px;
  font-weight: 600;
  line-height: 44px;
}
.to-end {
  position: absolute;
  right: 0;
  bottom: 75px;
  justify-content: center;
  box-sizing: border-box;
  width: 108px;
  height: 80px;
  border: 1px solid #303232;
  border-right: 0;
  border-radius: 18px 0 0 18px;
  background: #242626;
}
.to-end svg {
  width: 48px;
  height: 48px;
}

.bottom {
  flex: none;
  border-top: 1px solid #383a3a;
  background: #242626;
}
.composer {
  display: flex;
  align-items: center;
  padding: 14px 34px 0 27px;
}
.plus svg {
  width: 40px;
  height: 40px;
}
.field {
  display: flex;
  flex: 1;
  align-items: center;
  box-sizing: border-box;
  min-width: 0;
  height: 64px;
  margin: 0 37px 0 27px;
  padding: 0 20px 0 28px;
  border: 1px solid #484a4a;
  border-radius: 32px;
  background: #393b3b;
}
.field input {
  flex: 1;
  width: 0;
  min-width: 0;
  padding: 0;
  border: 0;
  outline: 0;
  background: none;
  color: #fff;
  font: 36px Inter, "Liberation Sans", sans-serif;
}
.sticker svg {
  width: 40px;
  height: 40px;
}
.camera svg {
  width: 46px;
  height: 38px;
}
.mic {
  margin-left: 39px;
}
.mic svg {
  width: 32px;
  height: 46px;
}
.home {
  width: 296px;
  height: 10px;
  margin: 56px auto 16px;
  border-radius: 5px;
  background: #fff;
}
</style>
